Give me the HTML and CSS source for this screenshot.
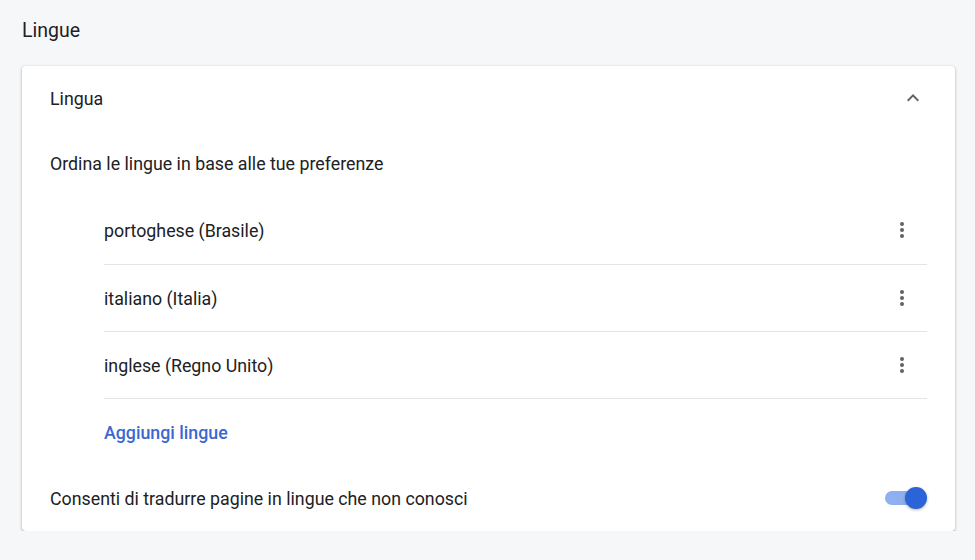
FILE: index.html
```html
<!DOCTYPE html>
<html lang="it">
<head>
    <meta charset="UTF-8">
    <meta name="viewport" content="width=device-width, initial-scale=1.0">
    <title>Lingue</title>
    <link rel="stylesheet" href="styles.css">
</head>
<body>
    <h1 class="page-title">Lingue</h1>

    <section class="card">
        <div class="card-header">
            <span>Lingua</span>
            <svg class="chevron" width="24" height="24" viewBox="0 0 24 24">
                <path d="M7.41 15.41 12 10.83l4.59 4.58L18 14l-6-6-6 6z" fill="#5f6368"/>
            </svg>
        </div>

        <div class="description">Ordina le lingue in base alle tue preferenze</div>

        <ul class="lang-list">
            <li class="lang-row">
                <span>portoghese (Brasile)</span>
                <svg class="more" width="24" height="24" viewBox="0 0 24 24">
                    <circle cx="12" cy="6" r="2" fill="#5f6368"/>
                    <circle cx="12" cy="12" r="2" fill="#5f6368"/>
                    <circle cx="12" cy="18" r="2" fill="#5f6368"/>
                </svg>
            </li>
            <li class="lang-row">
                <span>italiano (Italia)</span>
                <svg class="more" width="24" height="24" viewBox="0 0 24 24">
                    <circle cx="12" cy="6" r="2" fill="#5f6368"/>
                    <circle cx="12" cy="12" r="2" fill="#5f6368"/>
                    <circle cx="12" cy="18" r="2" fill="#5f6368"/>
                </svg>
            </li>
            <li class="lang-row">
                <span>inglese (Regno Unito)</span>
                <svg class="more" width="24" height="24" viewBox="0 0 24 24">
                    <circle cx="12" cy="6" r="2" fill="#5f6368"/>
                    <circle cx="12" cy="12" r="2" fill="#5f6368"/>
                    <circle cx="12" cy="18" r="2" fill="#5f6368"/>
                </svg>
            </li>
        </ul>

        <div class="add-row">
            <a class="add-link" href="#">Aggiungi lingue</a>
        </div>

        <div class="toggle-row">
            <span>Consenti di tradurre pagine in lingue che non conosci</span>
            <span class="toggle">
                <span class="toggle-track"></span>
                <span class="toggle-knob"></span>
            </span>
        </div>
    </section>
</body>
</html>
```

FILE: styles.css
```css
body {
    font-family: 'Roboto', 'Liberation Sans', sans-serif;
    background-color: #f6f7f9;
    color: #202124;
    margin: 0;
    padding: 0 20px 0 22px;
    font-size: 17.8px;
}

.page-title {
    font-size: 19.5px;
    font-weight: 400;
    margin: 0;
    height: 66px;
    line-height: 61px;
}

.card {
    background-color: #fff;
    border-radius: 4px;
    box-shadow: 0 1px 2px rgba(60, 64, 67, 0.3), 0 1px 3px 1px rgba(60, 64, 67, 0.12);
    padding: 0 28px;
}

.card-header {
    display: flex;
    align-items: center;
    justify-content: space-between;
    height: 64px;
}

.chevron {
    margin-right: 2px;
}

.description {
    display: flex;
    align-items: center;
    height: 66px;
}

.lang-list {
    list-style: none;
    margin: 0;
    padding: 0 0 0 54px;
}

.lang-row {
    display: flex;
    align-items: center;
    justify-content: space-between;
    height: 66px;
    border-bottom: 1px solid #e4e4e4;
}

.lang-row:first-child {
    height: 68px;
}

.more {
    margin-right: 13px;
}

.add-row {
    display: flex;
    align-items: center;
    height: 66px;
    padding-left: 54px;
}

.add-link {
    color: #3c67d2;
    font-weight: 500;
    text-decoration: none;
}

.toggle-row {
    display: flex;
    align-items: center;
    justify-content: space-between;
    height: 66px;
}

.toggle {
    position: relative;
    width: 42px;
    height: 22px;
    display: flex;
    align-items: center;
}

.toggle-track {
    width: 36px;
    height: 14px;
    border-radius: 7px;
    background-color: #8fb0ee;
}

.toggle-knob {
    position: absolute;
    right: 0;
    top: 0;
    width: 22px;
    height: 22px;
    border-radius: 50%;
    background-color: #2b63d8;
    box-shadow: 0 1px 3px rgba(0, 0, 0, 0.3);
}
```
